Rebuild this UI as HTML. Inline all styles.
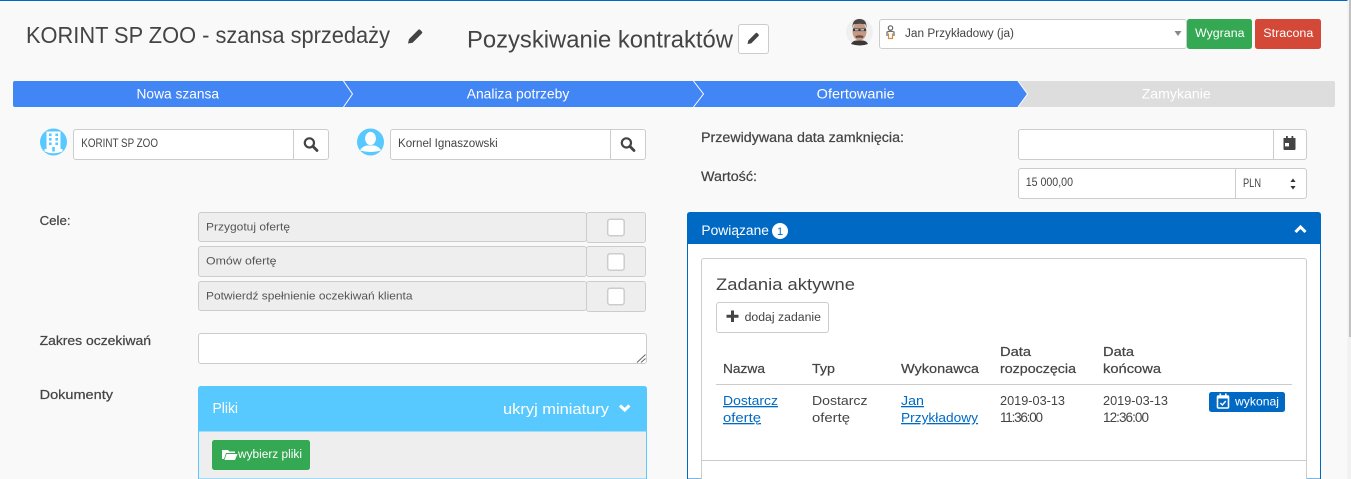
<!DOCTYPE html>
<html lang="pl"><head><meta charset="utf-8"><title>KORINT SP ZOO - szansa sprzedaży</title>
<style>
html,body{margin:0;padding:0;width:1351px;height:479px;overflow:hidden;background:#f9f9f9}
svg{display:block}
text{font-family:"Liberation Sans",sans-serif;fill:#444;white-space:pre}
.m{stroke:#444;stroke-width:.22}
.w{fill:#fff}
.u{fill:#0069c4;text-decoration:underline}
.g{fill:#555}
</style></head><body>
<svg width="1351" height="479" viewBox="0 0 1351 479" xmlns="http://www.w3.org/2000/svg">
<defs>
<path id="pen" d="M0 15 L1 10.6 L10.2 1.4 Q11.2 .4 12.2 1.4 L13.8 3 Q14.8 4 13.8 5 L4.6 14.2 Z M9.2 3.8 L11.6 6.2" fill="#444" stroke="none"/>
<g id="mag"><circle cx="6.4" cy="6.4" r="4.6" fill="none" stroke="#444" stroke-width="2.2"/><path d="M9.8 9.8 L14 14" stroke="#444" stroke-width="2.8" stroke-linecap="round"/></g>
</defs>
<rect width="1351" height="479" fill="#f9f9f9"/>
<rect x="0" y="0" width="1347.5" height="1" fill="#0069c4"/>
<rect x="1347.5" y="0" width="3.5" height="479" fill="#f1f1f1"/>
<rect x="1349" y="0" width="2" height="337" fill="#c1c1c1"/>

<!-- title -->
<text x="26" y="43" font-size="23" textLength="364" lengthAdjust="spacingAndGlyphs">KORINT SP ZOO - szansa sprzedaży</text>
<use href="#pen" x="408" y="28.5"/>
<text x="467" y="47.5" font-size="24" textLength="266" lengthAdjust="spacingAndGlyphs">Pozyskiwanie kontraktów</text>
<rect x="738.5" y="24.5" width="30" height="29" rx="2.5" fill="#fff" stroke="#ccc"/>
<use href="#pen" transform="translate(747.5 32) scale(.8)"/>

<!-- avatar -->
<circle cx="859.5" cy="32" r="13.5" fill="#efefef"/>
<ellipse cx="859.5" cy="31.5" rx="7" ry="9" fill="#c49a85"/>
<path d="M852.5 28 Q852 19 859.5 19 Q867 19 866.5 28 L865.5 24.5 Q859.5 23 853.5 24.5 Z" fill="#4a4542"/>
<rect x="853" y="28.5" width="13" height="2.6" fill="#3a3a3a"/>
<rect x="855" y="29.1" width="3.4" height="1.4" fill="#cfc6c0"/><rect x="860.6" y="29.1" width="3.4" height="1.4" fill="#cfc6c0"/>
<path d="M855.5 36 Q859.5 34.4 863.5 36 L863 38 Q859.5 37.2 856 38 Z" fill="#6a4a3e"/>
<path d="M851 44 Q852.5 41 856 40.5 L863 40.5 Q866.5 41 868 44 Q860 47 851 44 Z" fill="#3a3735"/>

<!-- owner select -->
<rect x="879.5" y="19.5" width="307" height="29" rx="2.5" fill="#fff" stroke="#ccc"/>
<circle cx="890.5" cy="28" r="2.2" fill="none" stroke="#666" stroke-width="1.2"/>
<path d="M887 36 V32 Q890.5 30.5 894 32 V36" fill="none" stroke="#666" stroke-width="1.2"/>
<path d="M888.5 33.5 V38.5 H892.5 V33.5" fill="none" stroke="#d98a3a" stroke-width="1.2"/>
<text x="905" y="37" font-size="11.5" textLength="109" lengthAdjust="spacingAndGlyphs">Jan Przykładowy (ja)</text>
<path d="M1174.5 31 h7 l-3.5 5 z" fill="#888"/>
<rect x="1187" y="19" width="65" height="30" rx="2.5" fill="#34a853"/>
<text x="1195" y="37" font-size="11.5" class="w" textLength="49.5" lengthAdjust="spacingAndGlyphs">Wygrana</text>
<rect x="1255" y="19" width="66" height="30" rx="2.5" fill="#d34836"/>
<text x="1263.3" y="37" font-size="11.5" class="w" textLength="50" lengthAdjust="spacingAndGlyphs">Stracona</text>

<!-- stepper -->
<path d="M13 83 Q13 81 15 81 H1019 L1027.5 94 L1019 107 H15 Q13 107 13 105 Z" fill="#4285f4"/>
<path d="M1018 81 H1333 Q1335 81 1335 83 V105 Q1335 107 1333 107 H1018 L1027 94 Z" fill="#dddddd"/>
<path d="M1018 81 L1027.5 94 L1018 107" fill="none" stroke="#fff" stroke-width="1"/>
<path d="M343.5 81 L352.5 94 L343.5 107" fill="none" stroke="#fff" stroke-width="1"/>
<path d="M693.5 81 L703.5 94 L693.5 107" fill="none" stroke="#fff" stroke-width="1"/>
<text x="136.5" y="98.5" font-size="14" class="w" textLength="82.5" lengthAdjust="spacingAndGlyphs">Nowa szansa</text>
<text x="466.7" y="98.5" font-size="14" class="w" textLength="102.6" lengthAdjust="spacingAndGlyphs">Analiza potrzeby</text>
<text x="816.7" y="98.5" font-size="14" class="w" textLength="78" lengthAdjust="spacingAndGlyphs">Ofertowanie</text>
<text x="1141.7" y="98.5" font-size="14" class="w" textLength="69" lengthAdjust="spacingAndGlyphs">Zamykanie</text>

<!-- company -->
<circle cx="53.5" cy="142" r="13.5" fill="#58c9ff"/>
<path d="M46.5 131.5 H60.5 V149 H62.5 V151.5 Q53.5 155 44.5 151.5 V149 H46.5 Z" fill="#fff"/>
<g fill="#58c9ff"><rect x="49" y="133.5" width="2.6" height="2.6"/><rect x="55.4" y="133.5" width="2.6" height="2.6"/><rect x="49" y="138" width="2.6" height="2.6"/><rect x="55.4" y="138" width="2.6" height="2.6"/><rect x="49" y="142.5" width="2.6" height="2.6"/><rect x="55.4" y="142.5" width="2.6" height="2.6"/><rect x="52.2" y="147" width="2.6" height="4.5"/></g>
<rect x="73.5" y="129.5" width="255" height="30" rx="2.5" fill="#fff" stroke="#ccc"/>
<rect x="293" y="130" width="1" height="29" fill="#ccc"/>
<text x="81.3" y="147" font-size="11.5" textLength="76.7" lengthAdjust="spacingAndGlyphs">KORINT SP ZOO</text>
<use href="#mag" x="303" y="136.5"/>

<!-- contact -->
<circle cx="370.5" cy="142" r="13.5" fill="#58c9ff"/>
<ellipse cx="370.5" cy="138.5" rx="5.4" ry="6.6" fill="#fff"/>
<path d="M360 150.5 Q361.5 147 366.5 145.5 L374.5 145.5 Q379.5 147 381 150.5 Q371 153.5 360 150.5 Z" fill="#fff"/>
<rect x="390.5" y="129.5" width="255" height="30" rx="2.5" fill="#fff" stroke="#ccc"/>
<rect x="610" y="130" width="1" height="29" fill="#ccc"/>
<text x="398" y="147" font-size="11.5" textLength="99.7" lengthAdjust="spacingAndGlyphs">Kornel Ignaszowski</text>
<use href="#mag" x="620" y="136.5"/>

<!-- right form -->
<text x="701" y="142" font-size="13.5" class="m" textLength="203" lengthAdjust="spacingAndGlyphs">Przewidywana data zamknięcia:</text>
<text x="701" y="181" font-size="13.5" class="m" textLength="56" lengthAdjust="spacingAndGlyphs">Wartość:</text>
<rect x="1018.5" y="129.5" width="288" height="30" rx="2.5" fill="#fff" stroke="#ccc"/>
<rect x="1273" y="130" width="1" height="29" fill="#ccc"/>
<path d="M1283.5 138 H1295.5 V149 Q1295.5 150 1294.5 150 H1284.5 Q1283.5 150 1283.5 149 Z" fill="#444"/>
<rect x="1286" y="136" width="1.8" height="3" fill="#444"/><rect x="1291.5" y="136" width="1.8" height="3" fill="#444"/>
<rect x="1285" y="143" width="4" height="3.4" fill="#fff"/>
<rect x="1018.5" y="168.5" width="288" height="30" rx="2.5" fill="#fff" stroke="#ccc"/>
<rect x="1235" y="169" width="1" height="29" fill="#ccc"/>
<text x="1025.7" y="186" font-size="11.5" textLength="47.3" lengthAdjust="spacingAndGlyphs">15 000,00</text>
<text x="1243" y="187" font-size="11.5" textLength="18" lengthAdjust="spacingAndGlyphs">PLN</text>
<path d="M1293 178.5 l2.6 3.5 h-5.2 z M1293 189.5 l2.6 -3.5 h-5.2 z" fill="#333"/>

<!-- cele -->
<text x="39.6" y="225" font-size="13" class="m" textLength="31" lengthAdjust="spacingAndGlyphs">Cele:</text>
<g fill="#eeeeee" stroke="#ccc">
<rect x="586.5" y="212.5" width="59" height="30" rx="2.5"/>
<rect x="198.5" y="212.5" width="388" height="29" rx="2.5"/>
<rect x="586.5" y="246.5" width="59" height="30" rx="2.5"/>
<rect x="198.5" y="246.5" width="388" height="30" rx="2.5"/>
<rect x="586.5" y="281.5" width="59" height="30" rx="2.5"/>
<rect x="198.5" y="281.5" width="388" height="29" rx="2.5"/>
</g>
<g fill="#fff" stroke="#ccc" stroke-width="1.5">
<rect x="607.7" y="219.2" width="16.5" height="16.5" rx="2.5"/>
<rect x="607.7" y="253.7" width="16.5" height="16.5" rx="2.5"/>
<rect x="607.7" y="288.2" width="16.5" height="16.5" rx="2.5"/>
</g>
<text x="206" y="230.5" font-size="11" class="g" textLength="84" lengthAdjust="spacingAndGlyphs">Przygotuj ofertę</text>
<text x="206" y="264.5" font-size="11" class="g" textLength="70.5" lengthAdjust="spacingAndGlyphs">Omów ofertę</text>
<text x="206" y="299.5" font-size="11" class="g" textLength="206.5" lengthAdjust="spacingAndGlyphs">Potwierdź spełnienie oczekiwań klienta</text>

<!-- zakres -->
<text x="39.6" y="345" font-size="13" class="m" textLength="111.4" lengthAdjust="spacingAndGlyphs">Zakres oczekiwań</text>
<rect x="198.5" y="333.5" width="448" height="30" rx="2.5" fill="#fff" stroke="#ccc"/>
<path d="M637 362.5 L645.5 354.5 M641 362.5 L645.5 358.5" stroke="#666" stroke-width="1"/>

<!-- dokumenty -->
<text x="39.6" y="399" font-size="13" class="m" textLength="73.4" lengthAdjust="spacingAndGlyphs">Dokumenty</text>
<path d="M198.5 479 V431 H646.5 V479 Z" fill="#eeeeee" stroke="#58c9ff"/>
<path d="M198 431 V389 Q198 386 201 386 H644 Q647 386 647 389 V431 Z" fill="#58c9ff"/>
<text x="212.5" y="413" font-size="14.5" class="w" textLength="25.5" lengthAdjust="spacingAndGlyphs">Pliki</text>
<text x="503" y="414" font-size="15" class="w" textLength="106" lengthAdjust="spacingAndGlyphs">ukryj miniatury</text>
<path d="M620 405.5 L624.7 410 L629.4 405.5" fill="none" stroke="#fff" stroke-width="3"/>
<rect x="212" y="440" width="98" height="30" rx="2.5" fill="#34a853"/>
<path d="M222 450 H228 L229.5 451.5 H235 V453 H226 L224 459 H222 Z" fill="#fff"/>
<path d="M226.5 454 H237.5 L235 460 H224.5 Z" fill="#fff"/>
<text x="238" y="458" font-size="11.5" class="w" textLength="64" lengthAdjust="spacingAndGlyphs">wybierz pliki</text>

<!-- powiazane -->
<path d="M687.5 479 V243 H1320.5 V479 Z" fill="#fff" stroke="#0069c4"/>
<path d="M687 244 V215 Q687 212 690 212 H1318 Q1321 212 1321 215 V244 Z" fill="#0069c4"/>
<text x="701.4" y="235" font-size="13.5" class="w" textLength="67.6" lengthAdjust="spacingAndGlyphs">Powiązane</text>
<circle cx="780" cy="231" r="8" fill="#fff"/>
<text x="777" y="235" font-size="11" style="fill:#0069c4">1</text>
<path d="M1295.5 232 L1300.5 227 L1305.5 232" fill="none" stroke="#fff" stroke-width="3"/>

<rect x="701.5" y="258.5" width="605" height="230" rx="2.5" fill="#fff" stroke="#ccc"/>
<rect x="702" y="460" width="604" height="1" fill="#ccc"/>
<text x="716" y="290" font-size="17" textLength="139" lengthAdjust="spacingAndGlyphs">Zadania aktywne</text>
<rect x="716.5" y="302.5" width="112" height="30" rx="2.5" fill="#fff" stroke="#ccc"/>
<path d="M732.5 310.5 V322 M726.5 316.2 H738.5" stroke="#444" stroke-width="3"/>
<text x="744.6" y="321" font-size="11.5" textLength="76.4" lengthAdjust="spacingAndGlyphs">dodaj zadanie</text>

<text x="723" y="373" font-size="13" class="m" textLength="42" lengthAdjust="spacingAndGlyphs">Nazwa</text>
<text x="812" y="373" font-size="13" class="m" textLength="23" lengthAdjust="spacingAndGlyphs">Typ</text>
<text x="901" y="373" font-size="13" class="m" textLength="78" lengthAdjust="spacingAndGlyphs">Wykonawca</text>
<text x="1000" y="356" font-size="13" class="m" textLength="31" lengthAdjust="spacingAndGlyphs">Data</text>
<text x="1000" y="373" font-size="13" class="m" textLength="76" lengthAdjust="spacingAndGlyphs">rozpoczęcia</text>
<text x="1103" y="356" font-size="13" class="m" textLength="31" lengthAdjust="spacingAndGlyphs">Data</text>
<text x="1103" y="373" font-size="13" class="m" textLength="58" lengthAdjust="spacingAndGlyphs">końcowa</text>
<rect x="716" y="384" width="576" height="1" fill="#ccc"/>

<text x="723" y="405" font-size="13" class="u" textLength="55" lengthAdjust="spacingAndGlyphs">Dostarcz</text>
<text x="723" y="422" font-size="13" class="u" textLength="38" lengthAdjust="spacingAndGlyphs">ofertę</text>
<text x="812" y="405" font-size="13" textLength="55.5" lengthAdjust="spacingAndGlyphs">Dostarcz</text>
<text x="812" y="422" font-size="13" textLength="38" lengthAdjust="spacingAndGlyphs">ofertę</text>
<text x="901" y="405" font-size="13" class="u" textLength="23" lengthAdjust="spacingAndGlyphs">Jan</text>
<text x="901" y="422" font-size="13" class="u" textLength="77" lengthAdjust="spacingAndGlyphs">Przykładowy</text>
<text x="1000" y="405" font-size="13" textLength="65" lengthAdjust="spacingAndGlyphs">2019-03-13</text>
<text x="1000" y="422" font-size="13.5" textLength="43" lengthAdjust="spacing">11:36:00</text>
<text x="1103" y="405" font-size="13" textLength="65" lengthAdjust="spacingAndGlyphs">2019-03-13</text>
<text x="1103" y="422" font-size="13.5" textLength="46" lengthAdjust="spacing">12:36:00</text>

<rect x="1209" y="392" width="76" height="20" rx="2.5" fill="#0069c4"/>
<rect x="1217.5" y="396" width="11" height="12" rx="1" fill="none" stroke="#fff" stroke-width="1.6"/>
<rect x="1217" y="395.5" width="12" height="3" fill="#fff"/>
<rect x="1219.5" y="393.5" width="1.6" height="3" fill="#fff"/><rect x="1225" y="393.5" width="1.6" height="3" fill="#fff"/>
<path d="M1220.3 403 L1222.4 405 L1225.8 401" fill="none" stroke="#fff" stroke-width="1.4"/>
<text x="1235" y="405.5" font-size="12" class="w" textLength="44" lengthAdjust="spacingAndGlyphs">wykonaj</text>
</svg>
</body></html>
